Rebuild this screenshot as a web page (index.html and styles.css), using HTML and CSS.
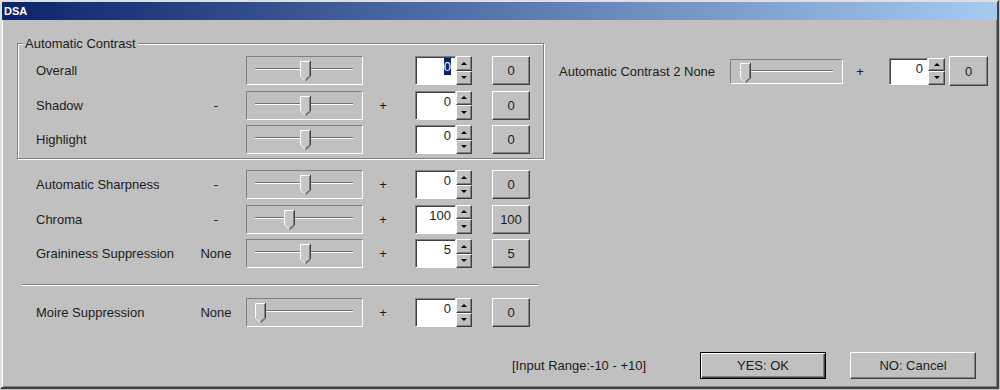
FILE: index.html
```html
<!DOCTYPE html>
<html lang="en">
<head>
  <meta charset="UTF-8" />
  <title>DSA</title>
  <link rel="stylesheet" href="styles.css">
</head>
<body>

<svg class="defs" width="0" height="0">
  <symbol id="thumb" viewBox="0 0 11 20">
    <path d="M0 0H11V15L5.5 20L0 15Z" fill="#c6c6c6"/>
    <path d="M0.5 15V0.5H10" fill="none" stroke="#fff"/>
    <path d="M10.5 0V15.2L5.5 19.8" fill="none" stroke="#404040"/>
    <path d="M9.5 1V14.8L5.5 18.4" fill="none" stroke="#808080"/>
    <path d="M0.5 15.2L5 19.3" fill="none" stroke="#eee"/>
  </symbol>
</svg>

<div class="window">
  <div class="titlebar">DSA</div>

  <div class="client">
    <div class="left">
      <fieldset class="group">
        <legend>Automatic Contrast</legend>
        <div class="rows">
          <div class="row">
            <span class="label">Overall</span>
            <span class="sign"></span>
            <div class="slider"><div class="track"></div><svg class="thumb" style="left:53px"><use href="#thumb"/></svg></div>
            <span class="plus"></span>
            <div class="spin"><span class="field"><span class="sel">0</span></span><span class="arrows"><span class="raised up"></span><span class="raised down"></span></span></div>
            <button class="btn raised">0</button>
          </div>
          <div class="row">
            <span class="label">Shadow</span>
            <span class="sign">-</span>
            <div class="slider"><div class="track"></div><svg class="thumb" style="left:53px"><use href="#thumb"/></svg></div>
            <span class="plus">+</span>
            <div class="spin"><span class="field">0</span><span class="arrows"><span class="raised up"></span><span class="raised down"></span></span></div>
            <button class="btn raised">0</button>
          </div>
          <div class="row">
            <span class="label">Highlight</span>
            <span class="sign"></span>
            <div class="slider"><div class="track"></div><svg class="thumb" style="left:53px"><use href="#thumb"/></svg></div>
            <span class="plus"></span>
            <div class="spin"><span class="field">0</span><span class="arrows"><span class="raised up"></span><span class="raised down"></span></span></div>
            <button class="btn raised">0</button>
          </div>
        </div>
      </fieldset>

      <div class="rows loose first">
        <div class="row">
          <span class="label">Automatic Sharpness</span>
          <span class="sign">-</span>
          <div class="slider"><div class="track"></div><svg class="thumb" style="left:53px"><use href="#thumb"/></svg></div>
          <span class="plus">+</span>
          <div class="spin"><span class="field">0</span><span class="arrows"><span class="raised up"></span><span class="raised down"></span></span></div>
          <button class="btn raised">0</button>
        </div>
        <div class="row">
          <span class="label">Chroma</span>
          <span class="sign">-</span>
          <div class="slider"><div class="track"></div><svg class="thumb" style="left:37px"><use href="#thumb"/></svg></div>
          <span class="plus">+</span>
          <div class="spin"><span class="field">100</span><span class="arrows"><span class="raised up"></span><span class="raised down"></span></span></div>
          <button class="btn raised">100</button>
        </div>
        <div class="row">
          <span class="label">Graininess Suppression</span>
          <span class="sign">None</span>
          <div class="slider"><div class="track"></div><svg class="thumb" style="left:53px"><use href="#thumb"/></svg></div>
          <span class="plus">+</span>
          <div class="spin"><span class="field">5</span><span class="arrows"><span class="raised up"></span><span class="raised down"></span></span></div>
          <button class="btn raised">5</button>
        </div>
      </div>

      <div class="sep"></div>

      <div class="rows loose moire">
        <div class="row">
          <span class="label">Moire Suppression</span>
          <span class="sign">None</span>
          <div class="slider"><div class="track"></div><svg class="thumb" style="left:8px"><use href="#thumb"/></svg></div>
          <span class="plus">+</span>
          <div class="spin"><span class="field">0</span><span class="arrows"><span class="raised up"></span><span class="raised down"></span></span></div>
          <button class="btn raised">0</button>
        </div>
      </div>
    </div>

    <div class="right">
      <div class="row2">
        <span class="label">Automatic Contrast 2 None</span>
        <div class="slider small"><div class="track"></div><svg class="thumb" style="left:9px"><use href="#thumb"/></svg></div>
        <span class="plus">+</span>
        <div class="spin small"><span class="field">0</span><span class="arrows"><span class="raised up"></span><span class="raised down"></span></span></div>
        <button class="btn raised">0</button>
      </div>
    </div>

    <div class="footer">
      <span class="range">[Input Range:-10 - +10]</span>
      <button class="big raised default">YES: OK</button>
      <button class="big raised">NO: Cancel</button>
    </div>
  </div>
</div>

</body>
</html>
```

FILE: styles.css
```css
* { box-sizing: border-box; }
body {
  margin: 0;
  background: #c0c0c0;
  font-family: "Liberation Sans", Arial, sans-serif;
  font-size: 13px;
  color: #1c1c1c;
}
.defs { position: absolute; }

.window {
  width: 999px;
  height: 389px;
  background: #c0c0c0;
  border: 2px solid;
  border-color: #dfdfdf #404040 #404040 #dfdfdf;
  box-shadow: inset 1px 1px #fff, inset -1px -1px #808080;
}
.titlebar {
  height: 18px;
  padding-left: 2px;
  background: linear-gradient(to right, #0a246a, #a6caf0);
  color: #fff;
  font-size: 11px;
  font-weight: bold;
  line-height: 18px;
}

.client {
  display: grid;
  grid-template-columns: 527px 1fr;
  column-gap: 15px;
  padding: 16px 0 0 15px;
}

/* group box */
.group {
  margin: 0;
  padding: 5px 0 4px 0;
  min-width: 0;
  border: 1px solid #808080;
  box-shadow: inset 1px 1px #fff, 1px 1px #fff;
}
.group legend {
  margin-left: 5px;
  padding: 0 2px;
  line-height: 15px;
  background: #c0c0c0;
}
.group .rows { margin-left: 18px; }

.rows { display: flex; flex-direction: column; gap: 5.5px; }
.loose { padding-left: 19px; }
.loose.first { margin-top: 11px; }
.loose.moire { margin-top: 12px; }
.sep {
  margin: 16px 6px 0 5px;
  border-top: 1px solid #808080;
  border-bottom: 1px solid #fff;
}

.row {
  display: grid;
  grid-template-columns: 164px 32px 131px 52px 77px 38px;
  align-items: center;
  height: 29px;
}
.sign { text-align: center; }
.plus { text-align: center; padding-right: 12px; }

/* slider */
.slider {
  position: relative;
  justify-self: end;
  width: 117px;
  height: 29px;
  border: 1px solid;
  border-color: #808080 #fff #fff #808080;
}
.track {
  margin: 11px 9px 0 8px;
  border-top: 1px solid #707070;
  border-bottom: 1px solid #fff;
}
.thumb {
  position: absolute;
  top: 4px;
  width: 11px;
  height: 20px;
}
.slider.small { justify-self: start; width: 113px; height: 25px; }
.slider.small .track { margin: 10px 9px 0 8px; }
.slider.small .thumb { top: 3px; }

/* spin box */
.spin { display: flex; width: 57px; height: 29px; }
.field {
  width: 41px;
  padding: 2px 4px 0 0;
  background: #fff;
  border: 1px solid;
  border-color: #808080 #fff #fff #808080;
  box-shadow: inset 1px 1px #404040;
  text-align: right;
  line-height: 16px;
}
.sel { background: #0a246a; color: #fff; padding: 1px 0; }
.arrows { display: flex; flex-direction: column; width: 16px; }
.arrows span {
  flex: 1;
  display: flex;
  align-items: center;
  justify-content: center;
}
.arrows span::before {
  content: "";
  border-left: 3px solid transparent;
  border-right: 3px solid transparent;
}
.arrows .up::before { border-bottom: 3px solid #000; }
.arrows .down::before { border-top: 3px solid #000; }
.spin.small { width: 56px; height: 27px; }
.spin.small .field { width: 39px; }
.spin.small .arrows { width: 17px; }

.raised {
  background: #c0c0c0;
  border: 1px solid;
  border-color: #fff #404040 #404040 #fff;
  box-shadow: inset -1px -1px #808080;
}
.btn {
  width: 38px;
  height: 29px;
  padding: 0;
  font: inherit;
  color: inherit;
}

/* right column */
.right { padding-top: 20px; }
.row2 {
  display: grid;
  grid-template-columns: 171px 113px 46px 56px 43px;
  align-items: center;
  height: 30px;
}
.row2 .btn { justify-self: end; width: 39px; height: 30px; }

/* footer */
.footer {
  grid-column: 1 / -1;
  display: flex;
  align-items: center;
  margin-top: 25px;
  padding-left: 495px;
}
.range { width: 188px; }
.big {
  width: 126px;
  height: 27px;
  padding: 0;
  font: inherit;
  color: inherit;
}
.big + .big { margin-left: 24px; }
.default {
  border: 1px solid #000;
  box-shadow: inset 1px 1px #fff, inset -1px -1px #404040, inset -2px -2px #808080;
}
```
